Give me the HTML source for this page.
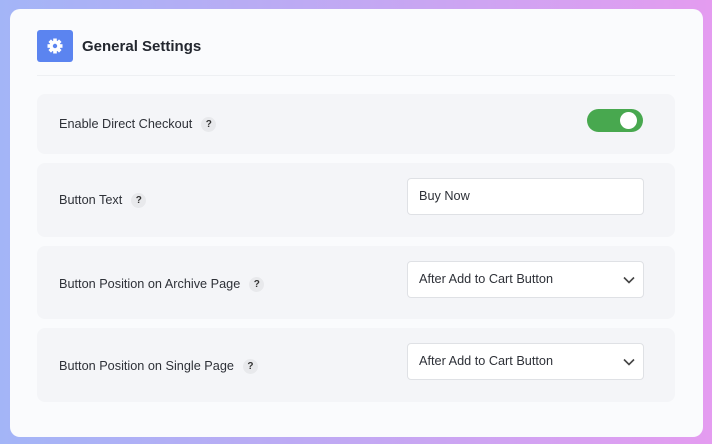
<!DOCTYPE html>
<html><head><style>
*{margin:0;padding:0;box-sizing:border-box}
body{width:712px;height:444px;overflow:hidden;background:linear-gradient(90deg,#a3b5f7 0%,#c2a8f3 50%,#e49cf0 100%);font-family:"Liberation Sans",sans-serif;position:relative}
.card{position:absolute;left:10px;top:9px;width:693px;height:428px;background:#fafbfd;border-radius:10px}
.icon{position:absolute;left:37px;top:30px;width:36px;height:32px;background:#5b84f0;border-radius:3px}
.title{position:absolute;left:82px;top:38px;font-size:15px;font-weight:bold;color:#23272f}
.div{position:absolute;left:37px;right:37px;top:75px;height:1px;background:#eef0f3}
.row{position:absolute;left:37px;width:638px;background:#f4f5f8;border-radius:8px}
.lbl{position:absolute;left:22px;font-size:12.7px;color:#2e3138}
.q{display:inline-block;width:15px;height:15px;border-radius:50%;background:#e8e9ec;font-size:10px;font-weight:bold;text-align:center;line-height:15px;margin-left:9px;color:#333;vertical-align:1px}
.inp{position:absolute;left:370px;width:237px;height:37px;background:#fff;border:1px solid #dfe1e5;border-radius:4px;font-size:12.7px;color:#2e3138;padding-left:11px;line-height:35px}
.chev{position:absolute;right:8px;top:14px}
.tog{position:absolute;left:550px;top:15px;width:56px;height:23px;background:#48a84f;border-radius:12px}
.tog::after{content:"";position:absolute;right:6px;top:3px;width:17px;height:17px;border-radius:50%;background:#fff}
</style></head><body>
<div class="card"></div>
<div class="icon"><svg width="36" height="32" viewBox="0 0 36 32"><g transform="translate(18 16)" fill="#fff"><circle r="5.5"/><g id="t"><rect x="-1.8" y="-7.5" width="3.6" height="4"/></g><use href="#t" transform="rotate(45)"/><use href="#t" transform="rotate(90)"/><use href="#t" transform="rotate(135)"/><use href="#t" transform="rotate(180)"/><use href="#t" transform="rotate(225)"/><use href="#t" transform="rotate(270)"/><use href="#t" transform="rotate(315)"/><circle r="2.2" fill="#5b84f0"/></g></svg></div>
<div class="title">General Settings</div>
<div class="div"></div>
<div class="row" style="top:94px;height:60px"><div class="lbl" style="top:23px">Enable Direct Checkout<span class="q">?</span></div><div class="tog"></div></div>
<div class="row" style="top:163px;height:74px"><div class="lbl" style="top:30px">Button Text<span class="q">?</span></div><div class="inp" style="top:15px">Buy Now</div></div>
<div class="row" style="top:246px;height:73px"><div class="lbl" style="top:31px">Button Position on Archive Page<span class="q">?</span></div><div class="inp" style="top:15px">After Add to Cart Button<svg class="chev" width="12" height="8" viewBox="0 0 12 8"><path d="M1 1.5l5 5 5-5" stroke="#444" stroke-width="1.6" fill="none"/></svg></div></div>
<div class="row" style="top:328px;height:74px"><div class="lbl" style="top:31px">Button Position on Single Page<span class="q">?</span></div><div class="inp" style="top:15px">After Add to Cart Button<svg class="chev" width="12" height="8" viewBox="0 0 12 8"><path d="M1 1.5l5 5 5-5" stroke="#444" stroke-width="1.6" fill="none"/></svg></div></div>
</body></html>
